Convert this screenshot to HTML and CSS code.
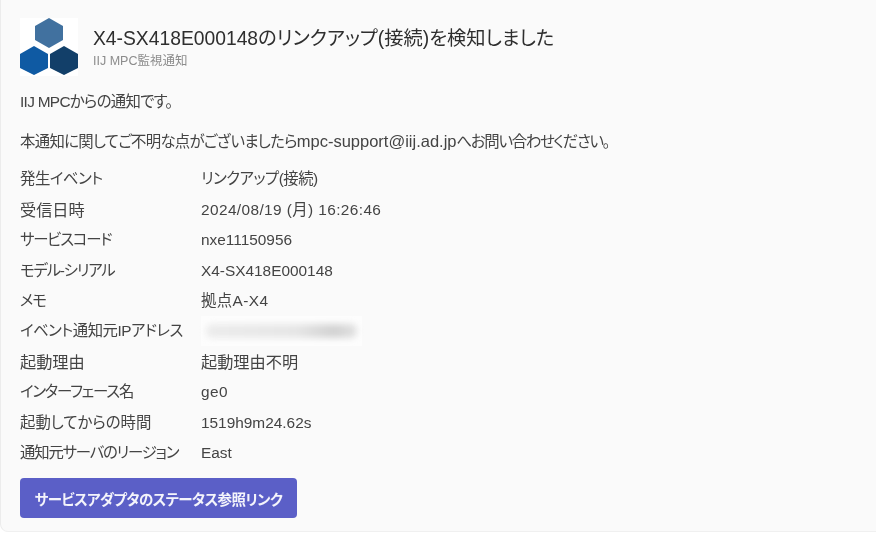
FILE: index.html
```html
<!DOCTYPE html>
<html lang="ja">
<head>
<meta charset="utf-8">
<title>IIJ MPC監視通知</title>
<link rel="stylesheet" href="styles.css">
</head>
<body>
<main class="card">
  <header class="head">
    <svg class="logo" viewBox="0 0 58 58" width="58" height="58" aria-hidden="true">
      <rect width="58" height="58" fill="#ffffff"/>
      <polygon points="29,0 43,8 43,22 29,30 15,22 15,8" fill="#41719f"/>
      <polygon points="14,28 28,36 28,50 14,57 0,50 0,36" fill="#0f5aa3"/>
      <polygon points="44,28 58,36 58,50 44,57 30,50 30,36" fill="#123f69"/>
    </svg>
    <div class="titles">
      <h1 class="title">X4-SX418E000148のリンクアップ(接続)を検知しました</h1>
      <p class="sub">IIJ MPC監視通知</p>
    </div>
  </header>
  <p class="line first">IIJ MPCからの通知です。</p>
  <p class="line second">本通知に関してご不明な点がございましたら<span class="mail">mpc-support@iij.ad.jp</span><span class="tail">へお問い合わせください。</span></p>
  <dl class="facts">
    <dt class="mix">発生イベント</dt><dd class="mix">リンクアップ(接続)</dd>
    <dt class="kanji">受信日時</dt><dd class="wide">2024/08/19 (月) 16:26:46</dd>
    <dt class="kana">サービスコード</dt><dd>nxe11150956</dd>
    <dt class="kana">モデル-シリアル</dt><dd>X4-SX418E000148</dd>
    <dt class="kana">メモ</dt><dd class="wide">拠点A-X4</dd>
    <dt class="mix">イベント通知元IPアドレス</dt><dd><div class="blur"><span class="smear"></span></div></dd>
    <dt class="kanji">起動理由</dt><dd class="kanji">起動理由不明</dd>
    <dt class="kana">インターフェース名</dt><dd class="wide">ge0</dd>
    <dt>起動してからの時間</dt><dd>1519h9m24.62s</dd>
    <dt class="kana">通知元サーバのリージョン</dt><dd>East</dd>
  </dl>
  <a class="btn" href="#">サービスアダプタのステータス参照リンク</a>
</main>
</body>
</html>
```
FILE: styles.css
```css
* { box-sizing: border-box; }
html, body { margin: 0; padding: 0; background: #ffffff; }
body {
  width: 876px;
  height: 535px;
  overflow: hidden;
  font-family: "Liberation Sans", "Noto Sans CJK JP", sans-serif;
  font-feature-settings: "palt";
  color: #444444;
}
.card {
  height: 532px;
  padding: 18px 0 0 19px;
  background: #fafafa;
  border-left: 1px solid #ececec;
  border-bottom: 1px solid #f0f0f0;
  border-radius: 0 0 0 8px;
  display: flex;
  flex-direction: column;
  align-items: flex-start;
  filter: blur(0.35px);
}
.head { display: flex; align-items: flex-start; gap: 15px; height: 59px; }
.logo { display: block; flex: none; }
.titles { padding-top: 8px; }
.title {
  margin: 0;
  font-size: 19.3px;
  line-height: 26px;
  font-weight: 400;
  color: #2e2e2e;
}
.sub { margin: 2px 0 0; font-size: 12.5px; line-height: 14px; color: #8c8c8c; }
.line { margin: 0; font-size: 15.4px; line-height: 20px; letter-spacing: -0.7px; }
.mail { font-size: 16.5px; line-height: 1; letter-spacing: 0; }
.tail { letter-spacing: -1.3px; }
.first { margin-top: 15px; }
.second { margin-top: 20px; }
.facts {
  margin: 12px 0 0;
  display: grid;
  grid-template-columns: 181px 1fr;
  grid-auto-rows: 30.45px;
  align-items: center;
  font-size: 15.4px;
  line-height: 20px;
}
.facts dt, .facts dd { margin: 0; }
.facts .kana { letter-spacing: -1.2px; }
.facts .mix { letter-spacing: -0.5px; }
.facts .kanji { font-size: 16.2px; }
.facts .wide { letter-spacing: 0.4px; }
.blur {
  width: 161px;
  height: 30px;
  background: #fdfdfd;
  display: flex;
  align-items: center;
  padding: 0 5px;
}
.smear {
  display: block;
  width: 100%;
  height: 14px;
  border-radius: 6px;
  background: linear-gradient(90deg, #ececec 0%, #e6e6e6 60%, #d2d2d2 85%, #e2e2e2 100%);
  filter: blur(3px);
}
.btn {
  margin-top: 10px;
  width: 277px;
  height: 40px;
  display: flex;
  align-items: center;
  justify-content: center;
  background: #5b5fc7;
  border-radius: 4px;
  color: #f4f4fb;
  font-size: 14.5px;
  font-weight: 700;
  letter-spacing: -0.6px;
  text-decoration: none;
}
```
